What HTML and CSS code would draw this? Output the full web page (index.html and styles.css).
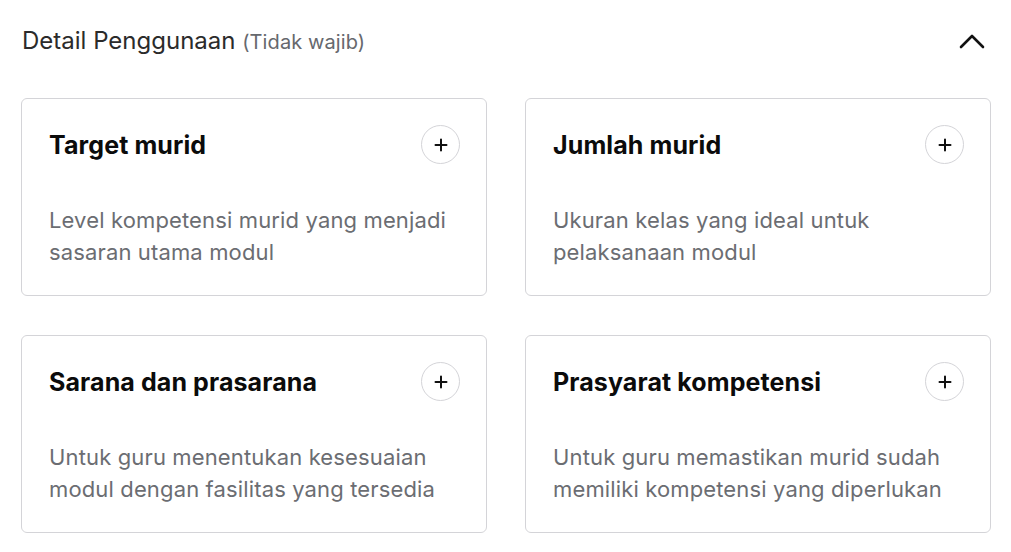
FILE: index.html
```html
<!DOCTYPE html>
<html lang="id">
<head>
<meta charset="utf-8">
<title>Detail Penggunaan</title>
<link rel="stylesheet" href="styles.css">
</head>
<body>
<section class="panel">
  <header class="panel-head">
    <h2 class="panel-title">Detail Penggunaan <span class="optional">(Tidak wajib)</span></h2>
    <button class="collapse" aria-label="Tutup">
      <svg width="26" height="16" viewBox="0 0 26 16"><path d="M2 14 L13 3 L24 14" fill="none" stroke="#111" stroke-width="2.6" stroke-linecap="round" stroke-linejoin="round"/></svg>
    </button>
  </header>
  <div class="grid">
    <article class="card">
      <div class="card-head">
        <h3 class="card-title">Target murid</h3>
        <button class="add" aria-label="Tambah"><svg width="14" height="14" viewBox="0 0 14 14"><path d="M7 1.5v11M1.5 7h11" stroke="#111" stroke-width="2" stroke-linecap="round"/></svg></button>
      </div>
      <p class="card-desc">Level kompetensi murid yang menjadi sasaran utama modul</p>
    </article>
    <article class="card">
      <div class="card-head">
        <h3 class="card-title">Jumlah murid</h3>
        <button class="add" aria-label="Tambah"><svg width="14" height="14" viewBox="0 0 14 14"><path d="M7 1.5v11M1.5 7h11" stroke="#111" stroke-width="2" stroke-linecap="round"/></svg></button>
      </div>
      <p class="card-desc">Ukuran kelas yang ideal untuk pelaksanaan modul</p>
    </article>
    <article class="card">
      <div class="card-head">
        <h3 class="card-title">Sarana dan prasarana</h3>
        <button class="add" aria-label="Tambah"><svg width="14" height="14" viewBox="0 0 14 14"><path d="M7 1.5v11M1.5 7h11" stroke="#111" stroke-width="2" stroke-linecap="round"/></svg></button>
      </div>
      <p class="card-desc">Untuk guru menentukan kesesuaian modul dengan fasilitas yang tersedia</p>
    </article>
    <article class="card">
      <div class="card-head">
        <h3 class="card-title">Prasyarat kompetensi</h3>
        <button class="add" aria-label="Tambah"><svg width="14" height="14" viewBox="0 0 14 14"><path d="M7 1.5v11M1.5 7h11" stroke="#111" stroke-width="2" stroke-linecap="round"/></svg></button>
      </div>
      <p class="card-desc">Untuk guru memastikan murid sudah memiliki kompetensi yang diperlukan</p>
    </article>
  </div>
</section>
</body>
</html>
```
FILE: styles.css
```css
* { box-sizing: border-box; }
html, body { margin: 0; padding: 0; background: #fff; }
body {
  font-family: Inter, "Noto Sans", sans-serif;
  color: #111;
}

.panel { padding: 0 20px 0 21px; }

.panel-head {
  display: flex;
  align-items: center;
  justify-content: space-between;
  height: 82px;
  padding-left: 1px;
  padding-bottom: 1px;
}
.panel-title {
  margin: 0;
  font-size: 24px;
  font-weight: 400;
  color: #2b2b2b;
}
.optional { font-size: 20px; color: #66686d; letter-spacing: 0.1px; }

.collapse {
  border: 0;
  background: none;
  padding: 0;
  margin-right: 6px;
  display: flex;
  cursor: pointer;
}

.grid {
  margin-top: 16px;
  display: grid;
  grid-template-columns: 466px 466px;
  column-gap: 38px;
  row-gap: 39px;
}

.card {
  border: 1px solid #d4d4d8;
  border-radius: 6px;
  padding: 26px 26px 26px 27px;
  height: 198px;
}
.card-head {
  display: flex;
  align-items: center;
  justify-content: space-between;
  height: 39px;
}
.card-title {
  margin: 0;
  font-size: 25px;
  font-weight: 700;
  letter-spacing: 0.1px;
  color: #0b0b0b;
}
.add {
  width: 39px;
  height: 39px;
  border-radius: 50%;
  border: 1px solid #d4d4d8;
  background: #fff;
  display: flex;
  align-items: center;
  justify-content: center;
  padding: 0;
  cursor: pointer;
}
.card-desc {
  margin: 40px 0 0;
  font-size: 22px;
  letter-spacing: 0.14px;
  line-height: 32px;
  color: #6b6d72;
}
```
